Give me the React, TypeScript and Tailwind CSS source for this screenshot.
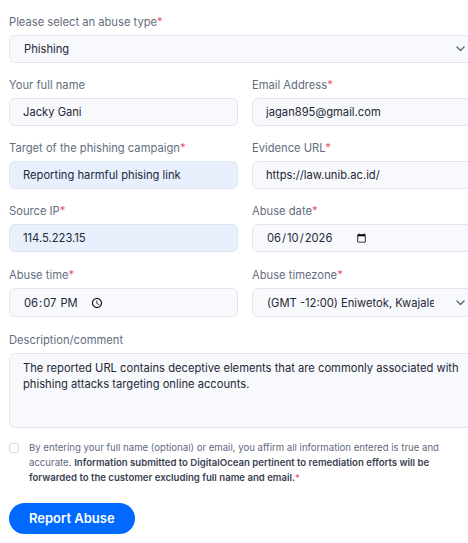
import React from 'react';

const labelCls = 'block text-[11.2px] leading-[16px] text-[#636d80] mb-[5px]';
const boxCls =
    'w-full h-[28px] rounded-[6px] border border-[#e3e6ec] bg-[#f8f9fc] px-[13px] text-[11.2px] text-[#232838] outline-none';
const filledCls =
    'w-full h-[28px] rounded-[6px] border border-[#dfe5f0] bg-[#e8f0fe] px-[13px] text-[11.2px] text-[#232838] outline-none';

function Label({ text, required }: { text: string; required?: boolean }) {
    return (
        <label className={labelCls}>
            {text}
            {required && <span className="text-[#f0506e]">*</span>}
        </label>
    );
}

function Chevron() {
    return (
        <svg
            className="pointer-events-none absolute right-[16px] top-1/2 -translate-y-1/2"
            width="9"
            height="6"
            viewBox="0 0 9 6"
            fill="none"
        >
            <path d="M1 1l3.5 3.5L8 1" stroke="#5a6478" strokeWidth="1.4" strokeLinecap="round" strokeLinejoin="round" />
        </svg>
    );
}

export default function App() {
    return (
        <div className="w-[468px] h-[543px] overflow-hidden bg-white" style={{ fontFamily: 'Inter, "Noto Sans", sans-serif' }}>
            <form className="w-[472px] ml-[9px] pt-[14px] flex flex-col gap-[14px]">
                {/* abuse type */}
                <div>
                    <Label text="Please select an abuse type" required />
                    <div className="relative">
                        <select className={`${boxCls} appearance-none pl-[14px] pr-[46px]`} defaultValue="phishing">
                            <option value="phishing">Phishing</option>
                            <option value="spam">Spam</option>
                            <option value="malware">Malware</option>
                        </select>
                        <Chevron />
                    </div>
                </div>

                <div className="grid grid-cols-2 gap-x-[14px] gap-y-[14px]">
                    <div>
                        <Label text="Your full name" />
                        <input className={boxCls} defaultValue="Jacky Gani" />
                    </div>
                    <div>
                        <Label text="Email Address" required />
                        <input className={boxCls} defaultValue="jagan895@gmail.com" />
                    </div>

                    <div>
                        <Label text="Target of the phishing campaign" required />
                        <input className={filledCls} defaultValue="Reporting harmful phising link" />
                    </div>
                    <div>
                        <Label text="Evidence URL" required />
                        <input className={boxCls} defaultValue="https://law.unib.ac.id/" />
                    </div>

                    <div>
                        <Label text="Source IP" required />
                        <input className={filledCls} defaultValue="114.5.223.15" />
                    </div>
                    <div>
                        <Label text="Abuse date" required />
                        <div className="h-[28px] rounded-[6px] border border-[#e3e6ec] bg-[#f8f9fc] px-[13px] flex items-center">
                            <input
                                type="date"
                                className="bg-transparent text-[11.2px] text-[#232838] outline-none"
                                defaultValue="2026-06-10"
                            />
                        </div>
                    </div>

                    <div className="mt-[1px]">
                        <Label text="Abuse time" required />
                        <div className="h-[29px] rounded-[6px] border border-[#e3e6ec] bg-[#f8f9fc] px-[13px] flex items-center">
                            <input
                                type="time"
                                className="bg-transparent text-[11.2px] text-[#232838] outline-none"
                                defaultValue="18:07"
                            />
                        </div>
                    </div>
                    <div className="mt-[1px]">
                        <Label text="Abuse timezone" required />
                        <div className="relative">
                            <select className={`${boxCls} h-[29px] appearance-none pl-[14px] pr-[46px]`} defaultValue="-12">
                                <option value="-12">(GMT -12:00) Eniwetok, Kwajalein</option>
                                <option value="-11">(GMT -11:00) Midway Island, Samoa</option>
                            </select>
                            <Chevron />
                        </div>
                    </div>
                </div>

                <div className="mt-[1px]">
                    <Label text="Description/comment" />
                    <textarea
                        className="w-full h-[75px] resize-none rounded-[6px] border border-[#e3e6ec] bg-[#f8f9fc] px-[13px] py-[6px] text-[11.2px] leading-[16px] text-[#232838] outline-none block"
                        defaultValue="The reported URL contains deceptive elements that are commonly associated with phishing attacks targeting online accounts."
                    />
                </div>

                <label className="flex items-start gap-[10px] pr-[36px] -mt-[2px]">
                    <span className="mt-[3px] w-[10px] h-[10px] shrink-0 rounded-[3px] border border-[#d5d9e2] bg-white" />
                    <span className="text-[9.6px] leading-[15px] text-[#5f6a7d]">
                        By entering your full name (optional) or email, you affirm all information entered is true and
                        accurate.{' '}
                        <span className="font-semibold text-[#3b4252]">
                            Information submitted to DigitalOcean pertinent to remediation efforts will be forwarded to the
                            customer excluding full name and email.
                        </span>
                        <span className="text-[#f0506e]">*</span>
                    </span>
                </label>

                <div className="pt-[4px]">
                    <button
                        type="button"
                        className="h-[31px] px-[20px] rounded-full bg-[#0069ff] text-white text-[13px] font-semibold"
                    >
                        Report Abuse
                    </button>
                </div>
            </form>
        </div>
    );
}
